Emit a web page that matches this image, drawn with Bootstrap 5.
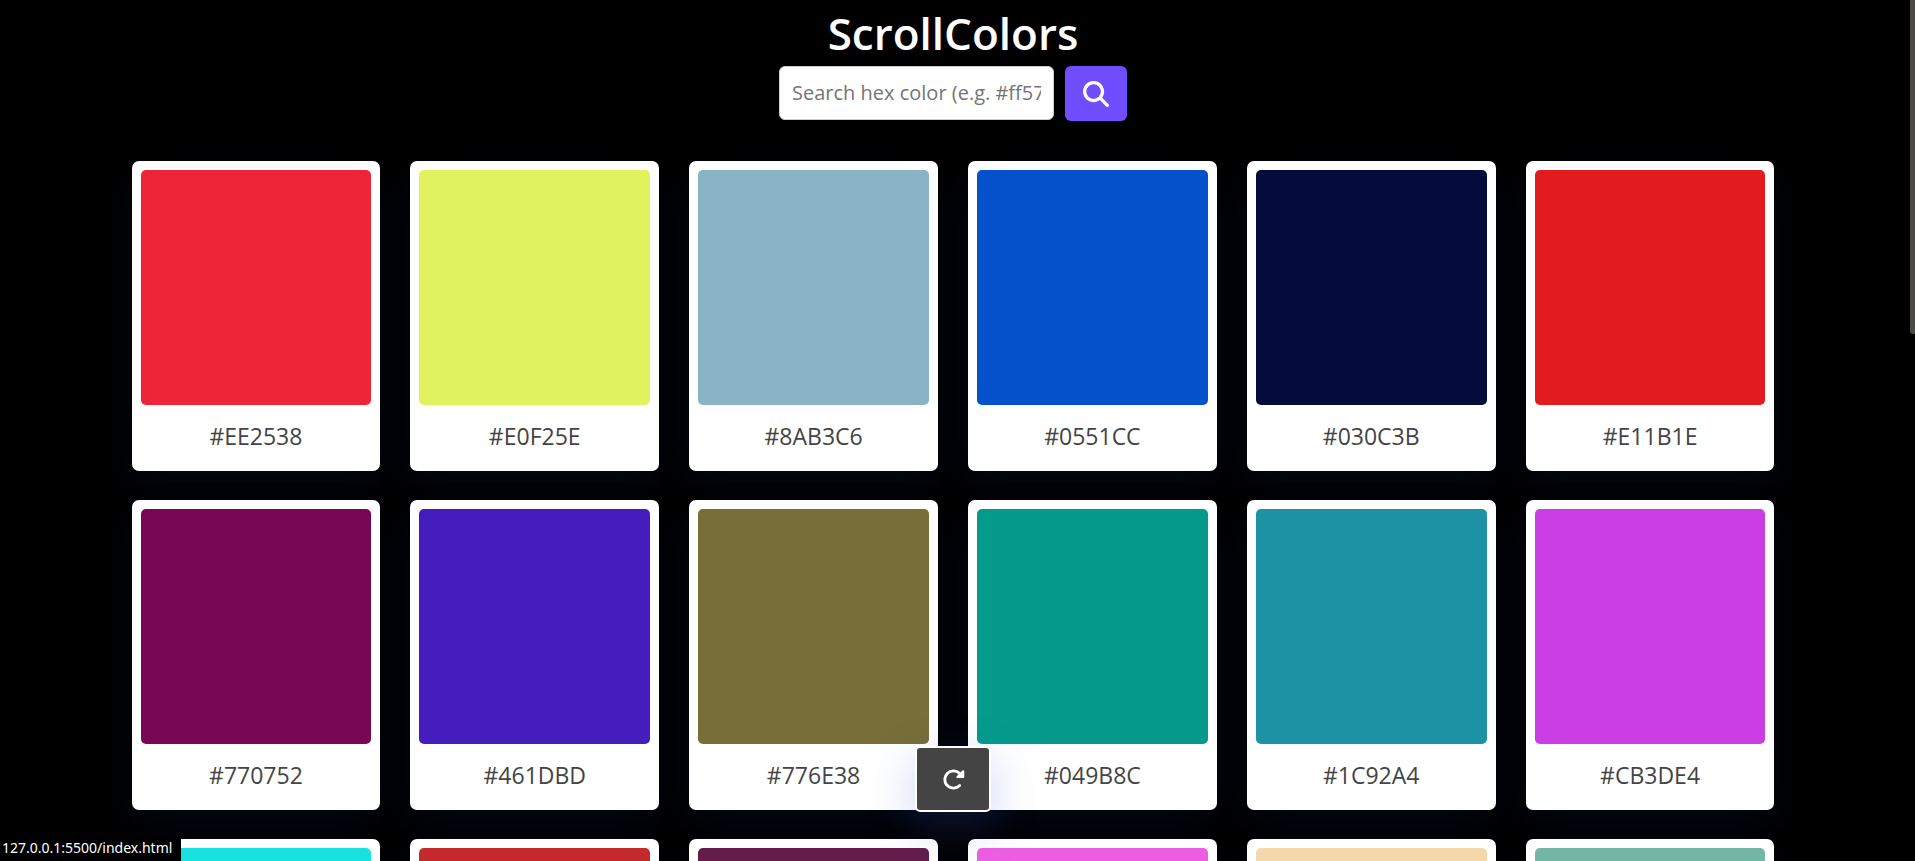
<!DOCTYPE html>
<html lang="en">
<head>
<meta charset="utf-8">
<meta name="viewport" content="width=device-width, initial-scale=1">
<title>ScrollColors</title>
<link href="https://cdn.jsdelivr.net/npm/bootstrap@5.3.0/dist/css/bootstrap.min.css" rel="stylesheet">
<script src="https://cdn.jsdelivr.net/npm/bootstrap@5.3.0/dist/js/bootstrap.bundle.min.js" defer></script>
<style>
body{background:#000;font-family:"Open Sans","Noto Sans",sans-serif;padding-right:9px}
.site-title{font-size:44px;line-height:66px;font-weight:600;color:#fff}
.search-form{gap:11px}
.search-input{width:275px;height:54px;padding:0 12px 2px;border:1px solid #ccc;border-radius:6px;font-size:20px;color:#444;background:#fff}
.search-input::placeholder{color:#757575;opacity:1}
.search-btn{width:62px;height:55px;background:#704dff;border:0;border-radius:6px}
.palette{max-width:1673px;padding:40px 15px 0}
.palette .row{--bs-gutter-x:30px;--bs-gutter-y:0}
.palette .col{margin-bottom:29px}
.color-card{border:0;border-radius:7px;padding:9px 9px 20px;box-shadow:0 15px 40px rgba(52,87,220,.08)}
.swatch{height:235px;border-radius:5px}
.hex{font-size:23px;line-height:30px;color:#444;margin-top:16px}
.refresh-bar{bottom:49px;padding-right:9px;pointer-events:none}
.refresh-btn{pointer-events:auto;width:76px;height:66px;background:#444;border:2px solid #fff;border-radius:5px;box-shadow:0 15px 45px rgba(52,87,220,.25)}
.status-link{background:#000;color:#fff;font-family:"Noto Sans",sans-serif;font-size:14px;line-height:18px;width:181px;padding:1px 0 4px 2px}
.scroll-thumb{width:5px;height:334px;background:#4a4946;border-radius:0 0 0 3px}
</style>
</head>
<body class="vh-100 overflow-hidden">
<header class="d-flex flex-column align-items-center">
<h1 class="site-title m-0">ScrollColors</h1>
<form class="search-form d-flex align-items-start">
<input class="search-input" type="text" placeholder="Search hex color (e.g. #ff5733)" aria-label="Search hex color">
<button class="search-btn d-flex align-items-center justify-content-center p-0" type="button" aria-label="Search">
<svg width="26" height="26" viewBox="0 0 512 512" fill="#fff"><path d="M416 208c0 45.900-14.900 88.300-40 122.700L502.600 457.400c12.500 12.500 12.500 32.800 0 45.300s-32.800 12.500-45.300 0L330.700 376c-34.400 25.200-76.800 40-122.700 40C93.100 416 0 322.900 0 208S93.100 0 208 0S416 93.100 416 208zM208 352a144 144 0 1 0 0-288 144 144 0 1 0 0 288z"/></svg>
</button>
</form>
</header>
<main class="palette mx-auto">
<div class="row row-cols-6">
<div class="col"><div class="card color-card"><div class="swatch" style="background:#EE2538"></div><div class="hex text-center">#EE2538</div></div></div>
<div class="col"><div class="card color-card"><div class="swatch" style="background:#E0F25E"></div><div class="hex text-center">#E0F25E</div></div></div>
<div class="col"><div class="card color-card"><div class="swatch" style="background:#8AB3C6"></div><div class="hex text-center">#8AB3C6</div></div></div>
<div class="col"><div class="card color-card"><div class="swatch" style="background:#0551CC"></div><div class="hex text-center">#0551CC</div></div></div>
<div class="col"><div class="card color-card"><div class="swatch" style="background:#030C3B"></div><div class="hex text-center">#030C3B</div></div></div>
<div class="col"><div class="card color-card"><div class="swatch" style="background:#E11B1E"></div><div class="hex text-center">#E11B1E</div></div></div>
<div class="col"><div class="card color-card"><div class="swatch" style="background:#770752"></div><div class="hex text-center">#770752</div></div></div>
<div class="col"><div class="card color-card"><div class="swatch" style="background:#461DBD"></div><div class="hex text-center">#461DBD</div></div></div>
<div class="col"><div class="card color-card"><div class="swatch" style="background:#776E38"></div><div class="hex text-center">#776E38</div></div></div>
<div class="col"><div class="card color-card"><div class="swatch" style="background:#049B8C"></div><div class="hex text-center">#049B8C</div></div></div>
<div class="col"><div class="card color-card"><div class="swatch" style="background:#1C92A4"></div><div class="hex text-center">#1C92A4</div></div></div>
<div class="col"><div class="card color-card"><div class="swatch" style="background:#CB3DE4"></div><div class="hex text-center">#CB3DE4</div></div></div>
<div class="col"><div class="card color-card"><div class="swatch" style="background:#18E2DF"></div></div></div>
<div class="col"><div class="card color-card"><div class="swatch" style="background:#C42A2B"></div></div></div>
<div class="col"><div class="card color-card"><div class="swatch" style="background:#641D4B"></div></div></div>
<div class="col"><div class="card color-card"><div class="swatch" style="background:#EE5EE2"></div></div></div>
<div class="col"><div class="card color-card"><div class="swatch" style="background:#F5D7AC"></div></div></div>
<div class="col"><div class="card color-card"><div class="swatch" style="background:#74B6A5"></div></div></div>
</div>
</main>
<div class="refresh-bar position-fixed start-0 end-0 d-flex justify-content-center">
<button class="refresh-btn d-flex align-items-center justify-content-center p-0" type="button" aria-label="Refresh colors">
<svg width="23" height="23" viewBox="0 0 512 512" fill="#fff"><path d="M463.500 224H472c13.300 0 24-10.700 24-24V72c0-9.700-5.800-18.500-14.800-22.200s-19.300-1.700-26.200 5.200L413.400 96.600c-87.600-86.500-228.700-86.200-315.800 1c-87.500 87.500-87.500 229.300 0 316.800s229.300 87.500 316.800 0c12.500-12.500 12.500-32.800 0-45.300s-32.800-12.500-45.300 0c-62.500 62.500-163.800 62.500-226.300 0s-62.500-163.800 0-226.300c62.200-62.200 162.700-62.500 225.300-1L327 183c-6.900 6.900-8.900 17.200-5.200 26.200s12.500 14.800 22.200 14.800H463.500z"/></svg>
</button>
</div>
<a class="status-link position-fixed bottom-0 start-0 text-decoration-none text-nowrap" href="index.html">127.0.0.1:5500/index.html</a>
<div class="scroll-thumb position-fixed top-0 end-0"></div>
</body>
</html>
